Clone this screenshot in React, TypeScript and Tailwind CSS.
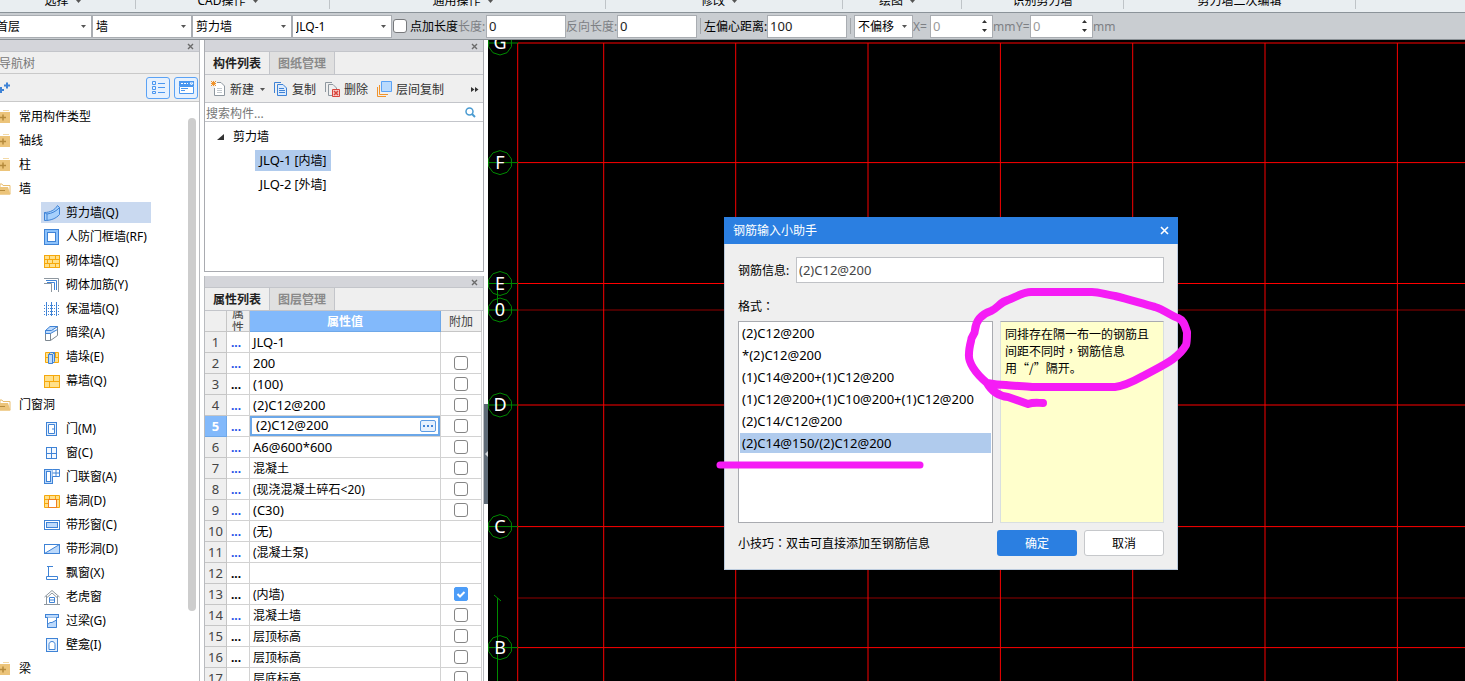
import React, { useState } from 'react';

type IconName =
  | 'shear' | 'frame' | 'brick' | 'rebar' | 'insulation' | 'beam' | 'pier' | 'curtain'
  | 'door' | 'window' | 'doorWindow' | 'hole' | 'stripWindow' | 'stripHole' | 'bay'
  | 'dormer' | 'lintel' | 'niche';

const BLUE = '#3f83d6';
const LIGHT = '#bcd9fb';

const icons: Record<IconName, React.ReactNode> = {
  shear: (
    <g stroke={BLUE} fill="#a6d0fc">
      <path d="M.5 7.500C6 7.500 11 5 13.500.5L15.500 2.500V9.500C12 13.500 7 15.500.5 15.500Z" />
      <path d="M.5 7.500L3 9C8 8.500 12.500 6 15.500 2.500M3 9V15.500" fill="none" />
    </g>
  ),
  frame: (
    <g stroke={BLUE}>
      <rect x=".5" y=".5" width="14" height="15" fill="#8cc2fb" />
      <rect x="3.500" y="3.500" width="8" height="9" fill="#fff" />
    </g>
  ),
  brick: (
    <g stroke="#f5a80c" fill="#ffe08a">
      <rect x=".5" y="2.500" width="15" height="12" />
      <path d="M.5 6.500H15.500M.5 10.500H15.500M5.500 2.500V6.500M11.500 2.500V6.500M8.500 6.500V10.500M3.500 6.500V10.500M5.500 10.500V14.500M11.500 10.500V14.500" />
    </g>
  ),
  rebar: (
    <g fill="none">
      <path d="M0 1.500H14.500V15M0 6.500H7.500V15" stroke="#8e979f" />
      <path d="M2 3.500H12.500V13M3 5.500H10.500V13" stroke={BLUE} />
    </g>
  ),
  insulation: (
    <g stroke={BLUE} fill="none">
      <path d="M2.500 1V15M7.500 1V15M12.500 1V15" />
      <path d="M0 4.500H15M0 7.500H15M0 10.500H15M0 13.500H15" strokeDasharray="1 1" />
    </g>
  ),
  beam: (
    <g stroke="#7d8790" fill="#fff">
      <path d="M1.500 5.500H6.500V15.500H1.500ZM6.500 5.500L13.500 1.500V10.500L6.500 15.500" />
      <path d="M1.500 5.500L6 1.500H13.500L7.500 5.500ZM1.500 5.500V8.500H6.500L13.500 4.500" stroke={BLUE} fill={LIGHT} />
    </g>
  ),
  pier: (
    <g>
      <path d="M1.500 3.500H14.500V13.500H1.500ZM1.500 8.500H14.500M11.500 3.500V8.500" stroke="#f5a80c" fill="#ffe08a" />
      <path d="M4.500 5.500H8.500V14.500H4.500ZM8.500 5.500L10.500 3.500V12.500L8.500 14.500M4.500 5.500L6.500 3.500H10.500" stroke={BLUE} fill={LIGHT} />
    </g>
  ),
  curtain: (
    <g stroke="#f5a80c" fill="#ffe08a">
      <rect x=".5" y="2.500" width="15" height="12" />
      <path d="M.5 8.500H15.500M9.500 2.500V8.500M5.500 8.500V14.500" />
    </g>
  ),
  door: (
    <g stroke={BLUE}>
      <rect x="2.500" y="1.500" width="10" height="13" fill="#e4f0fe" />
      <path d="M4.500 3.500H10.500V12.500H4.500Z" fill="#fff" />
      <path d="M9 7V9" />
    </g>
  ),
  window: (
    <g stroke={BLUE} fill="#f4f9ff">
      <rect x="2.500" y="2.500" width="10" height="11" />
      <path d="M7.500 2.500V13.500M2.500 8.500H12.500" />
    </g>
  ),
  doorWindow: (
    <g stroke={BLUE}>
      <rect x=".5" y=".5" width="8" height="14" fill={LIGHT} />
      <rect x="2.500" y="2.500" width="4" height="10" fill="#fff" />
      <path d="M8.500.5H15.500V7.500H8.500M12 .5V7.500M8.500 4H15.500" fill="#fff" />
    </g>
  ),
  hole: (
    <g>
      <path d="M.5 2.500H15.500V14.500H.5ZM.5 6.500H15.500M5.500 2.500V6.500M11.500 2.500V6.500M.5 10.500H4" stroke="#f5a80c" fill="#ffe08a" />
      <rect x="4.500" y="6.500" width="8" height="8" stroke="#f07f22" fill="#fff" />
    </g>
  ),
  stripWindow: (
    <g stroke={BLUE}>
      <rect x=".5" y="3.500" width="15" height="9" fill="#fff" />
      <rect x="2.500" y="5.500" width="11" height="5" fill={LIGHT} />
    </g>
  ),
  stripHole: (
    <g stroke={BLUE}>
      <rect x=".5" y="3.500" width="15" height="9" fill="#fff" />
      <path d="M15.500 3.500V12.500H.5Z" fill={LIGHT} />
    </g>
  ),
  bay: <path d="M3 1.500H9M4.500 1.500V11.500M2.500 11.500H13.500V14.500H2.500Z" stroke={BLUE} fill="none" />,
  dormer: (
    <g fill="none">
      <path d="M.5 8L8 1.500L15.500 8M2.500 7V15.500M13.500 7V15.500M0 15.500H16M3 8.500L8 4L13 8.500" stroke="#8e979f" />
      <path d="M5.500 8.500H10.500V13.500H5.500ZM5.500 11H10.500" stroke={BLUE} />
    </g>
  ),
  lintel: (
    <g stroke={BLUE}>
      <rect x="1.500" y="1.500" width="13" height="3" fill={LIGHT} />
      <path d="M3.500 4.500V14.500H12.500V4.500" fill="#fff" />
      <path d="M3.500 11.500L6 9.500H8L12.500 7V14.500H3.500Z" fill={LIGHT} />
    </g>
  ),
  niche: (
    <g stroke={BLUE}>
      <rect x="2.500" y="1.500" width="11" height="13" fill="#e4f0fe" />
      <path d="M5 12.500V7.500C5 3.500 11 3.500 11 7.500V12.500Z" fill="#fff" />
    </g>
  ),
};

interface NavNode {
  label: string;
  open?: boolean;
  children?: { label: string; icon: IconName }[];
}

const navTree: NavNode[] = [
  { label: '常用构件类型' },
  { label: '轴线' },
  { label: '柱' },
  {
    label: '墙',
    open: true,
    children: [
      { label: '剪力墙(Q)', icon: 'shear' },
      { label: '人防门框墙(RF)', icon: 'frame' },
      { label: '砌体墙(Q)', icon: 'brick' },
      { label: '砌体加筋(Y)', icon: 'rebar' },
      { label: '保温墙(Q)', icon: 'insulation' },
      { label: '暗梁(A)', icon: 'beam' },
      { label: '墙垛(E)', icon: 'pier' },
      { label: '幕墙(Q)', icon: 'curtain' },
    ],
  },
  {
    label: '门窗洞',
    open: true,
    children: [
      { label: '门(M)', icon: 'door' },
      { label: '窗(C)', icon: 'window' },
      { label: '门联窗(A)', icon: 'doorWindow' },
      { label: '墙洞(D)', icon: 'hole' },
      { label: '带形窗(C)', icon: 'stripWindow' },
      { label: '带形洞(D)', icon: 'stripHole' },
      { label: '飘窗(X)', icon: 'bay' },
      { label: '老虎窗', icon: 'dormer' },
      { label: '过梁(G)', icon: 'lintel' },
      { label: '壁龛(I)', icon: 'niche' },
    ],
  },
  { label: '梁' },
];

interface PropRow {
  value: string;
  blue?: boolean;
  extra?: boolean;
  checked?: boolean;
}

const properties: PropRow[] = [
  { value: 'JLQ-1', blue: true },
  { value: '200', blue: true, extra: true },
  { value: '(100)', extra: true },
  { value: '(2)C12@200', blue: true, extra: true },
  { value: '(2)C12@200', blue: true, extra: true },
  { value: 'A6@600*600', blue: true, extra: true },
  { value: '混凝土', blue: true, extra: true },
  { value: '(现浇混凝土碎石<20)', blue: true, extra: true },
  { value: '(C30)', blue: true, extra: true },
  { value: '(无)', blue: true },
  { value: '(混凝土泵)', blue: true },
  { value: '' },
  { value: '(内墙)', extra: true, checked: true },
  { value: '混凝土墙', blue: true, extra: true },
  { value: '层顶标高', extra: true },
  { value: '层顶标高', extra: true },
  { value: '层底标高', extra: true },
];
const ACTIVE_ROW = 4;

const formats = [
  '(2)C12@200',
  '*(2)C12@200',
  '(1)C14@200+(1)C12@200',
  '(1)C12@200+(1)C10@200+(1)C12@200',
  '(2)C14/C12@200',
  '(2)C14@150/(2)C12@200',
];

const ribbonGroups = [
  { label: '选择', width: 'w-[136px]', menu: true },
  { label: 'CAD操作', width: 'w-[194px]', menu: true },
  { label: '通用操作', width: 'w-[276px]', menu: true },
  { label: '修改', width: 'w-[237px]', menu: true },
  { label: '绘图', width: 'w-[119px]', menu: true },
  { label: '识别剪力墙', width: 'w-[162px]' },
  { label: '剪力墙二次编辑', width: 'w-[232px]' },
];

const Caret = ({ className = '' }: { className?: string }) => (
  <svg width="5" height="3" viewBox="0 0 5 3" className={className}>
    <path d="M0 0H5L2.500 3Z" fill="#555" />
  </svg>
);

// Full-width punctuation set in the middle of its box
const Mark = ({ children }: { children: React.ReactNode }) => (
  <span className="font-['Noto_Sans_CJK_TC',sans-serif] leading-none">{children}</span>
);

const CloseMark = ({ label }: { label: string }) => (
  <button aria-label={label} className="flex h-full w-[17px] items-center justify-center pt-px">
    <svg width="7" height="7" viewBox="0 0 7 7">
      <path d="M1 1L6 6M6 1L1 6" stroke="#6b6b6b" strokeWidth="1.400" />
    </svg>
  </button>
);

const PanelBar = ({ label }: { label: string }) => (
  <div className="flex h-3 shrink-0 justify-end border-b border-[#c3c5ca] bg-[#d4d5da]">
    <CloseMark label={label} />
  </div>
);

const Combo = ({ value, label, className }: { value: string; label: string; className: string }) => (
  <div className={`relative h-[23px] shrink-0 ${className}`}>
    <select aria-label={label} defaultValue={value} className="h-full w-full appearance-none border border-[#a9adb2] bg-white px-[3px] pt-px text-black">
      <option>{value}</option>
    </select>
    <Caret className="pointer-events-none absolute right-[6px] top-[10px]" />
  </div>
);

const Spin = ({ id }: { id: string }) => (
  <div className="flex h-[23px] w-[63px] shrink-0 items-center border border-[#a9adb2] bg-white pr-[5px]">
    <input id={id} defaultValue="0" className="w-full min-w-0 bg-transparent px-[2px] pt-px text-[13px] text-[#9a9a9a] outline-none" />
    <svg width="5" height="14" viewBox="0 0 5 14" className="shrink-0" fill="#333">
      <path d="M0 4H5L2.500 1ZM0 10H5L2.500 13Z" />
    </svg>
  </div>
);

const Folder = ({ open }: { open?: boolean }) => (
  <svg width="11" height="14" viewBox="0 0 11 14" className="shrink-0">
    {open ? (
      <>
        <path d="M0 2H2L3 3.500H10V12H0Z" fill="#fff" stroke="#e9bd6e" />
        <path d="M0 5H8L10.500 12.500H0Z" fill="#ecc47a" />
        <path d="M0 8.500H5" stroke="#b58a3c" />
      </>
    ) : (
      <>
        <path d="M3 0H9V1H3Z" fill="#f3d9a6" />
        <path d="M0 2H10V13H0Z" fill="#ecc47a" />
        <path d="M0 7.500H6M3 4.500V10.500" stroke="#b58a3c" strokeWidth="1.500" />
      </>
    )}
  </svg>
);

const OptionBar = () => (
  <div className="flex h-[27px] shrink-0 items-center overflow-hidden border-b border-[#8b9196] bg-[#c9cdd1] text-[#7d8084]">
    <Combo value="首层" label="楼层" className="-ml-2 w-[100px]" />
    <Combo value="墙" label="构件大类" className="w-[100px]" />
    <Combo value="剪力墙" label="构件类型" className="w-[100px]" />
    <Combo value="JLQ-1" label="构件" className="w-[100px]" />
    <label className="ml-[1px] flex items-center gap-[3px] whitespace-nowrap text-black">
      <input type="checkbox" className="size-[14px] appearance-none rounded-[3px] border border-[#77797c] bg-white" />
      <span className="pt-px">点加长度</span>
    </label>
    <label htmlFor="len" className="w-[28px] whitespace-nowrap pt-px">长度:</label>
    <input id="len" defaultValue="0" className="h-[23px] w-20 border border-[#a9adb2] bg-white px-[2px] text-[13px] text-[#1d1d1d]" />
    <label htmlFor="rev" className="w-[51px] whitespace-nowrap pt-px">反向长度:</label>
    <input id="rev" defaultValue="0" className="h-[23px] w-20 border border-[#a9adb2] bg-white px-[2px] text-[13px] text-[#1d1d1d]" />
    <div className="mx-[3px] h-4 w-px bg-[#a3a7ab]" />
    <label htmlFor="ecc" className="w-[63px] whitespace-nowrap pt-px text-black">左偏心距离:</label>
    <input id="ecc" defaultValue="100" className="h-[23px] w-20 border border-[#a9adb2] bg-white px-[2px] text-[13px] text-[#1d1d1d]" />
    <div className="mx-[3px] h-4 w-px bg-[#a3a7ab]" />
    <Combo value="不偏移" label="偏移方式" className="w-[59px]" />
    <label htmlFor="dx" className="w-[17px] pt-px">X=</label>
    <Spin id="dx" />
    <span className="w-[23px] pt-px">mm</span>
    <label htmlFor="dy" className="w-[14px] pt-px">Y=</label>
    <Spin id="dy" />
    <span className="pt-px">mm</span>
  </div>
);

const NavPanel = () => {
  const [selected, setSelected] = useState('剪力墙(Q)');

  return (
    <aside className="flex w-[200px] shrink-0 flex-col overflow-hidden border-r border-[#b9bbbf]">
      <PanelBar label="关闭导航树" />
      <h2 className="-ml-px flex h-[22px] shrink-0 items-center border-b border-[#c9c9c9] bg-[#efefef] pt-[2px] text-[#777]">导航树</h2>
      <div className="flex h-7 shrink-0 items-center border-b border-[#c9c9c9] bg-[#efefef] pr-px">
        <button aria-label="添加" className="mr-auto">
          <svg width="11" height="14" viewBox="0 0 11 14" stroke="#3f83d6" strokeWidth="2">
            <path d="M0 9H4M1 6V12M4 4.500H10M7 1.500V7.500" />
          </svg>
        </button>
        <button aria-label="列表视图" className="mr-1 flex h-[22px] w-6 items-center justify-center rounded-[3px] border border-[#5aa2f5] bg-[#e6f1fe]">
          <svg width="13" height="13" viewBox="0 0 13 13" stroke="#4a97f0" fill="none">
            <path d="M.5.5H3.500V3.500H.5ZM.5 5.500H3.500V8.500H.5ZM.5 10.500H3.500V12.500H.5ZM6 2.500H13M6 6.500H13M6 11.500H13" />
          </svg>
        </button>
        <button aria-label="面板视图" className="flex h-[22px] w-6 items-center justify-center rounded-[3px] border border-[#5aa2f5] bg-[#e6f1fe]">
          <svg width="15" height="13" viewBox="0 0 15 13" fill="none">
            <path d="M0 0H15V5H0Z" fill="#4a97f0" />
            <path d="M2 2.500H4M5 2.500H7M8 2.500H9M11 2H14L12.500 4Z" stroke="#fff" />
            <path d="M.5 5.500H14.500V12.500H.5Z" stroke="#4a97f0" fill="#fff" />
            <path d="M2 7.500H9M2 9.500H6" stroke="#4a97f0" />
          </svg>
        </button>
      </div>
      <div className="flex min-h-0 flex-1 overflow-hidden bg-white pt-[3px]">
        <ul className="flex-1">
          {navTree.map((node) => (
            <li key={node.label}>
              <div className="flex h-6 items-center gap-2">
                <Folder open={node.open} />
                {node.label}
              </div>
              {node.children && (
                <ul>
                  {node.children.map((child) => (
                    <li key={child.label} className="flex h-6 items-start pl-[41px] pt-px">
                      <button
                        onClick={() => setSelected(child.label)}
                        className={`flex h-[21px] w-[110px] items-center gap-[6px] whitespace-nowrap pl-[3px] ${
                          selected === child.label ? 'bg-[#c9d9f0]' : ''
                        }`}
                      >
                        <svg width="16" height="16" viewBox="0 0 16 16" className="shrink-0">
                          {icons[child.icon]}
                        </svg>
                        <span className="pt-px">{child.label}</span>
                      </button>
                    </li>
                  ))}
                </ul>
              )}
            </li>
          ))}
        </ul>
        <div className="mr-[3px] mt-[13px] h-[493px] w-2 rounded-full bg-[#cdcdcd]" />
      </div>
    </aside>
  );
};

const Tabs = ({ items }: { items: string[] }) => (
  <div role="tablist" className="flex h-[23px] shrink-0 border-b border-[#c3c5ca] bg-[#efefef] font-bold">
    {items.map((item, i) => (
      <button
        key={item}
        role="tab"
        aria-selected={i === 0}
        className={`w-[65px] border-r border-[#c3c5ca] pt-[2px] ${i === 0 ? 'text-[#222]' : 'bg-[#e0e0e0] text-[#8a8a8a]'}`}
      >
        {item}
      </button>
    ))}
  </div>
);

const ComponentList = () => (
  <section className="flex h-[232px] shrink-0 flex-col border-x border-b border-[#a9abb0]">
    <PanelBar label="关闭构件列表" />
    <Tabs items={['构件列表', '图纸管理']} />
    <div className="flex h-7 shrink-0 items-center border-b border-[#c3c5ca] bg-[#efefef] pl-[6px] pr-1 pt-px text-[#333]">
      <button className="flex items-center gap-[4px]">
        <svg width="15" height="16" viewBox="0 0 15 16" fill="none">
          <path d="M6 1.500H10L13.500 5V14.500H3.500V7" stroke="#8e979f" fill="#fff" />
          <path d="M6 7.500H11M6 9.500H11M6 11.500H11" stroke="#c3c9ce" />
          <path d="M0 0L5 5M5 0L0 5M2.500 0V5M0 2.500H5" stroke="#f0932b" />
        </svg>
        <span className="pt-px">新建</span>
        <Caret className="ml-[2px]" />
      </button>
      <button className="ml-[9px] flex items-center gap-[5px]">
        <svg width="13" height="14" viewBox="0 0 13 14" fill="none" stroke="#3f83d6">
          <path d="M.5 11V.5H7" />
          <path d="M3.500 2.500H9L12.500 6V13.500H3.500Z" fill="#dcebfd" />
          <path d="M5 6.500H10M5 8.500H11M5 10.500H11" />
        </svg>
        <span className="pt-px">复制</span>
      </button>
      <button className="ml-[9px] flex items-center gap-[4px]">
        <svg width="15" height="15" viewBox="0 0 15 15" fill="none">
          <path d="M.5 10V.5H7M3.500 13.500V2.500H8L11.500 6V7M3.500 13.500H7" stroke="#8e979f" />
          <path d="M7.500 7.500H14.500V14.500H7.500Z" fill="#f7cdc9" stroke="#d8453c" />
          <path d="M9 9L13 13M13 9L9 13" stroke="#d8453c" strokeWidth="1.500" />
        </svg>
        <span className="pt-px">删除</span>
      </button>
      <button className="ml-[9px] flex items-center gap-[4px]">
        <svg width="15" height="16" viewBox="0 0 15 16" fill="none">
          <path d="M.5 6V15.500H9M2.500 4V13.500H11" stroke="#f0932b" />
          <path d="M4.500.5H14.500V10.500H4.500Z" fill="#b9dafd" stroke="#5aa2f5" />
        </svg>
        <span className="pt-px">层间复制</span>
      </button>
      <button aria-label="更多" className="ml-auto">
        <svg width="8" height="5" viewBox="0 0 8 5" fill="#333">
          <path d="M0 0L3.500 2.500L0 5ZM4 0L7.500 2.500L4 5Z" />
        </svg>
      </button>
    </div>
    <div className="flex h-[19px] shrink-0 items-center border-b border-[#c3c5ca] bg-white pl-[1px] pr-[7px]">
      <input aria-label="搜索构件" placeholder="搜索构件..." className="h-full min-w-0 flex-1 pt-[2px] outline-none placeholder:text-[#777]" />
      <svg width="11" height="11" viewBox="0 0 11 11" fill="none" stroke="#4a9bd1" strokeWidth="1.500">
        <circle cx="4.500" cy="4.500" r="3.500" />
        <path d="M7 7L10 10" strokeWidth="2" />
      </svg>
    </div>
    <div className="flex-1 bg-white pt-[3px]">
      <div className="flex h-6 items-center gap-[9px] pl-3">
        <svg width="7" height="6" viewBox="0 0 7 6">
          <path d="M7 0V6H0Z" fill="#333" />
        </svg>
        剪力墙
      </div>
      {['JLQ-1 [内墙]', 'JLQ-2 [外墙]'].map((name, i) => (
        <div key={name} className="flex h-6 items-start pl-[50px] pt-px">
          <button className={`h-[21px] w-[76px] whitespace-nowrap pt-px text-center ${i === 0 ? 'bg-[#b0cbed]' : ''}`}>
            <span className="text-[13px]">{name.slice(0, 5)}</span>
            {name.slice(5)}
          </button>
        </div>
      ))}
    </div>
  </section>
);

const PropertyList = () => (
  <section className="flex min-h-0 flex-1 flex-col overflow-hidden border-x border-[#b9bbbf] bg-white">
    <PanelBar label="关闭属性列表" />
    <Tabs items={['属性列表', '图层管理']} />
    <table className="w-[277px] table-fixed border-separate border-spacing-0">
      <colgroup>
        <col className="w-[22px]" />
        <col className="w-[23px]" />
        <col />
        <col className="w-[41px]" />
      </colgroup>
      <thead>
        <tr className="bg-[#efefef] text-[#444]">
          <th className="h-[21px] border-b border-r border-[#c6c6c6] p-0" />
          <th className="border-b border-r border-[#c6c6c6] p-0 font-normal">
            <div className="flex h-5 items-center overflow-hidden px-[5px] leading-[14px]">属性</div>
          </th>
          <th className="border-b border-r border-[#6fa8e8] bg-[#82b9fb] p-0 pt-[2px] font-bold text-white">属性值</th>
          <th className="border-b border-r border-[#c6c6c6] p-0 pt-[2px] font-normal">附加</th>
        </tr>
      </thead>
      <tbody>
        {properties.map((row, i) => {
          const active = i === ACTIVE_ROW;
          const cjk = /[\u4e00-\u9fff]/.test(row.value);
          return (
            <tr key={i}>
              <th
                scope="row"
                className={`h-[21px] border-b border-r p-0 text-center text-[13px] leading-5 ${
                  active ? 'border-[#6fa8e8] bg-[#82b9fb] font-bold text-white' : 'border-[#c6c6c6] bg-[#efefef] font-normal text-[#444]'
                }`}
              >
                {i + 1}
              </th>
              <td className={`border-b border-r border-[#d2d2d2] p-0 pl-1 pt-[2px] text-xs font-bold leading-[18px] ${row.blue ? 'text-[#1b4fe8]' : 'text-black'}`}>...</td>
              <td className={`border-b border-r border-[#d2d2d2] p-0 ${active ? '' : 'pl-[3px]'}`}>
                {active ? (
                  <div className="flex h-5 items-center border-2 border-[#6ba7e8] pl-1 pr-[2px] text-[13px]">
                    <input aria-label="属性值" defaultValue={row.value} className="h-4 min-w-0 flex-1 outline-none" />
                    <button aria-label="钢筋输入小助手" className="flex h-3 w-4 items-center justify-center rounded-[2px] border border-[#5b9be3] bg-[#e6f1fe]">
                      <svg width="10" height="2" viewBox="0 0 10 2" fill="#3f83d6">
                        <path d="M0 0H2V2H0ZM4 0H6V2H4ZM8 0H10V2H8Z" />
                      </svg>
                    </button>
                  </div>
                ) : (
                  <div className={cjk ? 'pt-[2px] text-xs leading-[18px]' : 'text-[13px] leading-5'}>{row.value}</div>
                )}
              </td>
              <td className="border-b border-r border-[#d2d2d2] p-0">
                {row.extra && (
                  <label className="mx-auto grid size-[14px]">
                    <input
                      type="checkbox"
                      aria-label={`附加 ${i + 1}`}
                      defaultChecked={row.checked}
                      className="peer col-start-1 row-start-1 size-[14px] appearance-none rounded-[3px] border border-[#858585] bg-white checked:rounded-[2px] checked:border-[#4d9df8] checked:bg-[#4d9df8]"
                    />
                    <svg viewBox="0 0 14 14" className="invisible col-start-1 row-start-1 peer-checked:visible" fill="none">
                      <path d="M3.500 7L6 9.500L10.500 5" stroke="#fff" strokeWidth="2" />
                    </svg>
                  </label>
                )}
              </td>
            </tr>
          );
        })}
      </tbody>
    </table>
  </section>
);

// Axis grid, in canvas coordinates
const columnsX = [29.7, 115.7, 247.7, 380, 512.4, 644.7, 777, 909.4];
const rowsY = [
  { y: 3, color: '#ff0000', name: 'G' },
  { y: 122.6, color: '#ff0000', name: 'F' },
  { y: 243.5, color: '#ff0000', name: 'E' },
  { y: 270, color: '#900000', name: '0' },
  { y: 365, color: '#ff0000', name: 'D' },
  { y: 486.6, color: '#ff0000', name: 'C' },
  { y: 558, color: '#900000', name: '' },
  { y: 607.6, color: '#ff0000', name: 'B' },
];

const bubble = (cy: number) =>
  Array.from({ length: 10 }, (_, k) => {
    const a = (k * Math.PI) / 5 + Math.PI / 2;
    return `${12 + 12 * Math.cos(a)},${cy + 12 * Math.sin(a)}`;
  }).join(' ');

const AxisGrid = () => (
  <svg className="block h-full w-full">
    {rowsY.map((r) => (
      <line key={r.y} x1="30" x2="100%" y1={r.y} y2={r.y} stroke={r.color} />
    ))}
    {columnsX.map((x) => (
      <line key={x} x1={x} x2={x} y1="3" y2="100%" stroke="#f80000" />
    ))}
    <g stroke="#008a00" fill="none">
      {rowsY.filter((r) => r.name).map((r) => (
        <g key={r.name}>
          <polygon points={bubble(r.y)} />
          <path d={`M0 ${r.y}H30`} />
        </g>
      ))}
      <path d="M9.500 244V270M6 555L13 561" />
      <line x1="9.500" x2="9.500" y1="558" y2="100%" />
    </g>
    <g fill="#fff" fontSize="18" textAnchor="middle">
      {rowsY.filter((r) => r.name).map((r) => (
        <text key={r.name} x="12" y={r.y + 6}>{r.name}</text>
      ))}
    </g>
  </svg>
);

const RebarDialog = () => {
  const [picked, setPicked] = useState(5);

  return (
    <div role="dialog" aria-label="钢筋输入小助手" className="absolute left-[236px] top-[177px] w-[454px] bg-[#efefef] text-black">
      <div className="flex h-[27px] items-center justify-between bg-[#2b7fe1] pl-[9px] pr-2 text-white">
        <span className="pt-px">钢筋输入小助手</span>
        <button aria-label="关闭" className="p-px">
          <svg width="9" height="9" viewBox="0 0 9 9">
            <path d="M1 1L8 8M8 1L1 8" stroke="#fff" strokeWidth="1.600" />
          </svg>
        </button>
      </div>
      <div className="border-x border-b border-[#bccbdd] px-[13px] pb-[13px] pt-[13px]">
        <div className="flex items-center">
          <label htmlFor="rebar" className="w-[58px] whitespace-nowrap pt-[2px]">钢筋信息:</label>
          <input id="rebar" defaultValue="(2)C12@200" className="h-[26px] min-w-0 flex-1 border border-[#c0c2c6] bg-white px-[2px] text-[13px] text-[#444]" />
        </div>
        <div className="mb-[6px] mt-4 h-4 leading-4">格式<Mark>：</Mark></div>
        <div className="flex h-[202px] gap-[7px]">
          <ul role="listbox" aria-label="格式" className="w-[255px] border border-[#a9abb0] bg-white px-px text-[13px]">
            {formats.map((f, i) => (
              <li key={f} role="option" aria-selected={picked === i} className="flex h-[22px] items-center">
                <button
                  onClick={() => setPicked(i)}
                  className={`h-5 w-full whitespace-nowrap pl-[2px] text-left leading-5 ${picked === i ? 'bg-[#b0cbed]' : ''}`}
                >
                  {f}
                </button>
              </li>
            ))}
          </ul>
          <p className="flex-1 whitespace-nowrap border border-[#d9dfe0] border-t-[#a9abb0] bg-[#ffffcc] px-1 pt-1 leading-[17px]">
            同排存在隔一布一的钢筋且
            <br />
            间距不同时<Mark>，</Mark>钢筋信息
            <br />
            用<span className="font-['Noto_Sans_CJK_SC',sans-serif] leading-none">“/”</span>隔开。
          </p>
        </div>
        <div className="mt-[7px] flex items-center">
          <span className="mr-auto pt-[2px] leading-4">小技巧<Mark>：</Mark>双击可直接添加至钢筋信息</span>
          <button className="h-[26px] w-20 rounded-[3px] bg-[#2b7fe1] pt-[2px] text-white">确定</button>
          <button className="ml-[7px] h-[26px] w-20 rounded-[3px] border border-[#c6c8cb] bg-white pt-[2px]">取消</button>
        </div>
      </div>
    </div>
  );
};

// Marker strokes drawn over the dialog
const Markup = () => (
  <svg className="pointer-events-none absolute inset-0 h-full w-full" fill="none" stroke="#f51cf5" strokeLinecap="round" strokeLinejoin="round">
    <path
      strokeWidth="8"
      d="M499 343C487 333 480 322 481 314C481 309 482 305 483 301C483 296 487 295 487 290C488 280 494 274 503 271C510 268 512 262 520 260C528 257 535 252 543 252H604C612 252 618 255 627 256C640 259 655 264 667 267C677 270 683 276 690 278C697 281 697 287 699 292C699 298 699 302 698 305C690 319 675 325 657 335C648 340 638 346 627 347H544C535 346 525 346 518 345C510 345 504 344 499 343C504 352 511 356 520 357L540 364C546 362 550 363 555 363"
    />
    <path strokeWidth="7" d="M232 425H432" />
  </svg>
);

const App: React.FC = () => {
  return (
    <div className="flex h-screen flex-col overflow-hidden bg-white font-['Noto_Sans','Noto_Sans_CJK_SC',sans-serif] text-xs text-black">
      {/* Ribbon captions */}
      <header className="flex h-[13px] shrink-0 overflow-hidden border-b border-[#8b9399] bg-[#e9eef1]">
        {ribbonGroups.map((g) => (
          <div
            key={g.label}
            className={`flex h-[9px] shrink-0 items-end justify-center gap-[7px] border-r border-[#bfc4c8] pr-[10px] ${g.menu ? '' : 'pl-[10px]'} ${g.width}`}
          >
            <span className="leading-4">{g.label}</span>
            {g.menu && <Caret className="mb-[6px]" />}
          </div>
        ))}
      </header>

      <OptionBar />

      <main className="flex min-h-0 flex-1">
        <NavPanel />
        <div className="ml-1 flex w-[280px] shrink-0 flex-col gap-1">
          <ComponentList />
          <PropertyList />
        </div>
        <div className="flex w-1 shrink-0 items-center">
          <button aria-label="折叠面板" className="mt-[186px] flex h-[100px] w-1 items-center bg-[#5f6b77]">
            <svg width="4" height="6" viewBox="0 0 4 6">
              <path d="M4 0V6L1 3Z" fill="#d5d9dd" />
            </svg>
          </button>
        </div>
        <div className="relative min-w-0 flex-1 overflow-hidden bg-black">
          <AxisGrid />
          <RebarDialog />
          <Markup />
        </div>
      </main>
    </div>
  );
};

export default App;
